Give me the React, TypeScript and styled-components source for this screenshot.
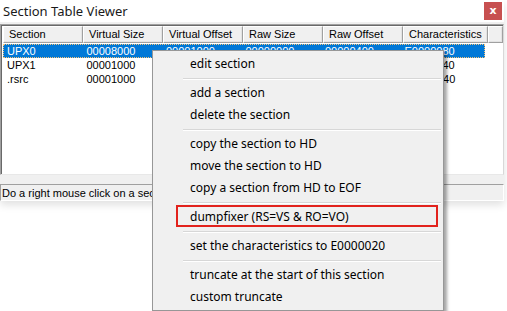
import styled, { createGlobalStyle } from 'styled-components'

const GlobalStyle = createGlobalStyle`
  html, body {
    margin: 0;
    padding: 0;
    background: #ffffff;
  }
  #root {
    width: 507px;
    height: 311px;
    overflow: hidden;
    position: relative;
  }
`

const Window = styled.div`
  width: 504px;
  display: flex;
  flex-direction: column;
  background: #ffffff;
  font-family: "Liberation Sans", Arial, sans-serif;
  box-shadow: 0 4px 8px rgba(0, 0, 0, 0.12);
`

const TitleBar = styled.div`
  height: 22px;
  display: flex;
  align-items: center;
  justify-content: space-between;
  padding-left: 3px;
  padding-right: 2px;
  background: #ffffff;
`

const Title = styled.span`
  font-family: "Noto Sans", "Open Sans", sans-serif;
  font-size: 13px;
  color: #1a1a1a;
`

const CloseBtn = styled.div`
  width: 18px;
  height: 18px;
  background: #c75050;
  color: #ffffff;
  font-family: "DejaVu Sans", sans-serif;
  font-size: 11px;
  font-weight: bold;
  display: flex;
  align-items: center;
  justify-content: center;
  line-height: 1;
  padding-bottom: 2px;
  box-sizing: border-box;
`

const Body = styled.div`
  background: #f0f0f0;
  padding-top: 2px;
  display: flex;
  flex-direction: column;
`

const List = styled.div`
  height: 151px;
  background: #ffffff;
  border-top: 1px solid #a0a0a0;
  border-left: 1px solid #a0a0a0;
  border-right: 1px solid #d8d8d8;
  border-bottom: 1px solid #e8e8e8;
  box-shadow: inset 1px 1px 0 #696969;
  padding: 1px 0 0 2px;
  box-sizing: border-box;
  display: flex;
  flex-direction: column;
`

const HeaderRow = styled.div`
  display: flex;
  height: 17px;
`

const HeadCell = styled.div<{ $w: number }>`
  width: ${(p) => p.$w}px;
  flex: ${(p) => (p.$w ? 'none' : '1')};
  box-sizing: border-box;
  background: #f0f0f0;
  border-top: 1px solid #ffffff;
  border-left: 1px solid #ffffff;
  border-right: 1px solid #a0a0a0;
  border-bottom: 1px solid #a0a0a0;
  box-shadow: inset -1px -1px 0 #e3e3e3;
  font-size: 11px;
  color: #000;
  padding-left: 5px;
  line-height: 15px;
  white-space: nowrap;
  overflow: hidden;
`

const Row = styled.div<{ $sel?: boolean }>`
  display: flex;
  height: 14px;
  margin-top: ${(p) => (p.$sel ? '1px' : '0')};
  width: 482px;
  box-sizing: border-box;
  background: ${(p) => (p.$sel ? '#0078d7' : 'transparent')};
  color: ${(p) => (p.$sel ? '#ffffff' : '#000000')};
  outline: ${(p) => (p.$sel ? '1px dotted #f4c37a' : 'none')};
  outline-offset: -1px;
`

const Cell = styled.div<{ $w: number }>`
  width: ${(p) => p.$w}px;
  font-size: 11px;
  line-height: 14px;
  padding-left: 4px;
  box-sizing: border-box;
  white-space: nowrap;
  overflow: hidden;
`

const Gap = styled.div`
  height: 9px;
`

const StatusBar = styled.div`
  height: 17px;
  border-top: 1px solid #a0a0a0;
  border-left: 1px solid #a0a0a0;
  border-bottom: 1px solid #ffffff;
  border-right: 1px solid #ffffff;
  font-size: 11px;
  line-height: 16px;
  padding-left: 1px;
  color: #000;
  white-space: nowrap;
  overflow: hidden;
  box-sizing: border-box;
`

const Menu = styled.div`
  position: absolute;
  left: 152px;
  top: 50px;
  width: 290px;
  background: #f0f0f0;
  border: 1px solid #979797;
  box-shadow: 3px 3px 3px rgba(0, 0, 0, 0.35);
  padding: 2px 0 2px 0;
  font-family: "Noto Sans", "Open Sans", sans-serif;
  font-size: 12px;
  color: #000;
`

const Item = styled.div<{ $mark?: boolean }>`
  height: 22px;
  line-height: 21px;
  padding-left: 35px;
  margin: 0 3px 0 2px;
  white-space: nowrap;
  position: relative;
  box-sizing: border-box;
  ${(p) =>
    p.$mark &&
    `
    &::after {
      content: '';
      position: absolute;
      left: 21px;
      right: 2px;
      top: -1px;
      bottom: 1px;
      border: 2px solid #e2221c;
    }
  `}
`

const Separator = styled.div`
  height: 7px;
  display: flex;
  align-items: center;
  padding-left: 30px;
  padding-right: 2px;
  &::before {
    content: '';
    flex: 1;
    height: 1px;
    background: #d7d7d7;
    border-bottom: 1px solid #ffffff;
  }
`

const columns = [
  { name: 'Section', w: 80 },
  { name: 'Virtual Size', w: 80 },
  { name: 'Virtual Offset', w: 80 },
  { name: 'Raw Size', w: 80 },
  { name: 'Raw Offset', w: 80 },
  { name: 'Characteristics', w: 85 },
]

const rows = [
  ['UPX0', '00008000', '00001000', '00000000', '00000400', 'E0000080'],
  ['UPX1', '00001000', '00009000', '00000400', '00000400', 'E0000040'],
  ['.rsrc', '00001000', '0000A000', '00000200', '00000800', 'C0000040'],
]

type Entry = { label?: string; mark?: boolean; sep?: boolean }

const menu: Entry[] = [
  { label: 'edit section' },
  { sep: true },
  { label: 'add a section' },
  { label: 'delete the section' },
  { sep: true },
  { label: 'copy the section to HD' },
  { label: 'move the section to HD' },
  { label: 'copy a section from HD to EOF' },
  { sep: true },
  { label: 'dumpfixer (RS=VS & RO=VO)', mark: true },
  { sep: true },
  { label: 'set the characteristics to E0000020' },
  { sep: true },
  { label: 'truncate at the start of this section' },
  { label: 'custom truncate' },
]

const App = () => {
  return (
    <>
      <GlobalStyle />
      <Window>
        <TitleBar>
          <Title>Section Table Viewer</Title>
          <CloseBtn>x</CloseBtn>
        </TitleBar>
        <Body>
          <List>
            <HeaderRow>
              {columns.map((c) => (
                <HeadCell key={c.name} $w={c.w}>
                  {c.name}
                </HeadCell>
              ))}
              <HeadCell $w={0} />
            </HeaderRow>
            {rows.map((r, i) => (
              <Row key={r[0]} $sel={i === 0}>
                {r.map((v, j) => (
                  <Cell key={j} $w={columns[j].w}>
                    {v}
                  </Cell>
                ))}
              </Row>
            ))}
          </List>
          <Gap />
          <StatusBar>Do a right mouse click on a section to get the options</StatusBar>
        </Body>
      </Window>
      <Menu>
        {menu.map((m, i) =>
          m.sep ? (
            <Separator key={i} />
          ) : (
            <Item key={i} $mark={m.mark}>
              {m.label}
            </Item>
          )
        )}
      </Menu>
    </>
  )
}

export default App
